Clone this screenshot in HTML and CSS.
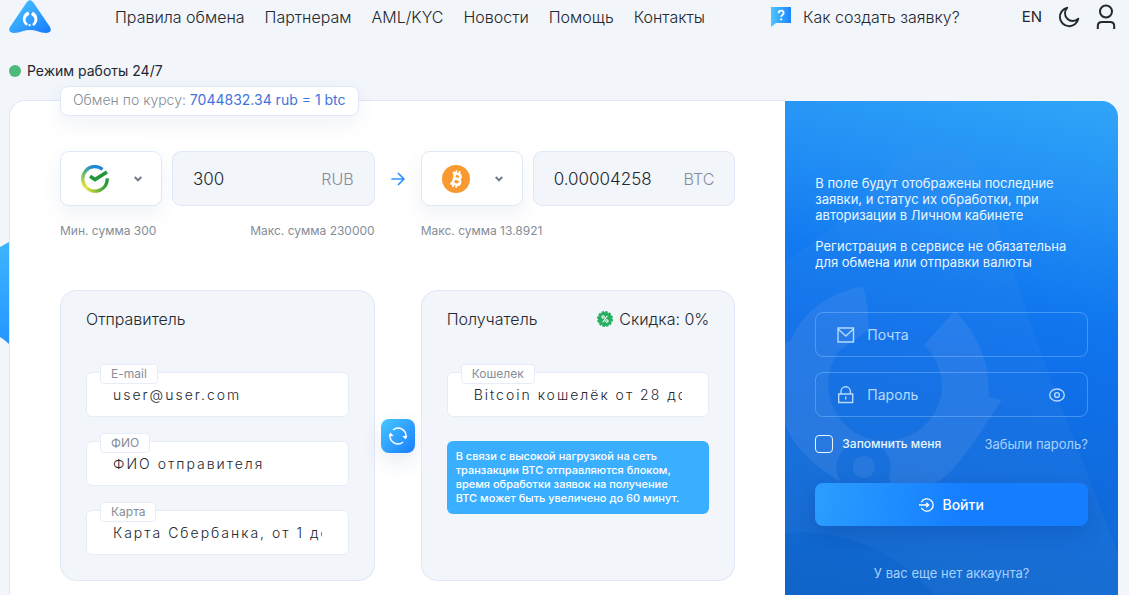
FILE: index.html
```html
<!DOCTYPE html>
<html lang="ru">
<head>
<meta charset="utf-8">
<meta name="viewport" content="width=device-width, initial-scale=1">
<title>Обмен RUB на BTC</title>
<link rel="stylesheet" href="styles.css">
</head>
<body>
<svg class="backdrop" viewBox="0 0 40 106" aria-hidden="true">
  <defs><linearGradient id="gBack" x1="0" y1="0" x2="0" y2="1"><stop offset="0" stop-color="#3fb9ff"/><stop offset="1" stop-color="#2292ff"/></linearGradient></defs>
  <path d="M0 6 L9 1 L40 -10 V116 L9 103 Q5 99 0 96Z" fill="url(#gBack)"/>
</svg>
<header class="header">
  <a class="logo" href="#" aria-label="Главная">
    <svg width="42" height="33" viewBox="0 0 42 33" aria-hidden="true">
      <defs><linearGradient id="gLogo" x1="0" y1="0" x2="1" y2="1"><stop offset="0" stop-color="#45c4ff"/><stop offset=".5" stop-color="#35a4ff"/><stop offset="1" stop-color="#1478ff"/></linearGradient></defs>
      <path d="M17.600 2.500 Q21 -1.800 24.400 2.500 L41 27 Q43.500 32.500 37.500 33 Q32 33 28.500 31.200 Q21 29 13.500 31.200 Q10 33 4.500 33 Q-1.500 32.500 1 27Z" fill="url(#gLogo)"/>
      <path d="M19.300 11.500 A8 8 0 0 0 17.500 25.800 L19 24 A5 5 0 0 1 17.300 17 L20.300 14.600Z" fill="#fff"/>
      <path d="M23.800 11.800 A8 8 0 0 1 24.300 26 L23.300 24 A5 5 0 0 0 24.600 17 L22 14.600Z" fill="#fff"/>
      <circle cx="20.600" cy="25.200" r="1.100" fill="#fff"/>
    </svg>
  </a>
  <nav class="nav">
    <a href="#">Правила обмена</a>
    <a href="#">Партнерам</a>
    <a href="#">AML/KYC</a>
    <a href="#">Новости</a>
    <a href="#">Помощь</a>
    <a href="#">Контакты</a>
  </nav>
  <a class="help" href="#">
    <svg width="20" height="20" viewBox="0 0 20 20" aria-hidden="true">
      <defs><linearGradient id="gHelp" x1="0" y1="0" x2="1" y2="0"><stop offset="0" stop-color="#4cc6ff"/><stop offset="1" stop-color="#1c84ff"/></linearGradient></defs>
      <path d="M0 0H20V16H5L0 20Z" fill="url(#gHelp)"/>
      <path d="M7.600 6.200 Q7.800 3.700 10.200 3.700 Q12.600 3.700 12.600 5.900 Q12.600 7.200 11.300 8 Q10.200 8.700 10.200 9.800" fill="none" stroke="#fff" stroke-width="1.800"/>
      <circle cx="10.200" cy="12.300" r="1.100" fill="#fff"/>
    </svg>
    <span>Как создать заявку?</span>
  </a>
  <div class="tools">
    <a class="lang" href="#">EN</a>
    <button class="tool" type="button" aria-label="Тёмная тема">
      <svg width="22" height="22" viewBox="0 0 22 22" fill="none" stroke="#23272e" stroke-width="1.900" stroke-linejoin="round" aria-hidden="true"><path d="M9.200 1.800 A9.300 9.300 0 1 0 20.300 12.700 A7.400 7.400 0 0 1 9.200 1.800Z"/></svg>
    </button>
    <a class="tool" href="#" aria-label="Профиль">
      <svg width="20" height="26" viewBox="0 0 20 26" fill="none" stroke="#23272e" stroke-width="2" aria-hidden="true"><circle cx="10" cy="7.500" r="6"/><path d="M1.800 25 V22 Q1.800 18 6 18 H14 Q18.200 18 18.200 22 V25"/></svg>
    </a>
  </div>
</header>

<p class="status"><span class="dot"></span>Режим работы 24/7</p>

<main class="card">
  <form class="exchange">
    <p class="rate">Обмен по курсу: <span>7044832.34 rub = 1 btc</span></p>
    <div class="columns">
      <div class="amount">
        <div class="picker">
          <svg width="28" height="28" viewBox="0 0 28 28" fill="none" aria-hidden="true">
            <defs>
              <linearGradient id="gS1" x1="0" y1="1" x2=".5" y2="0"><stop offset="0" stop-color="#f2e73b"/><stop offset=".55" stop-color="#6fbf62"/><stop offset="1" stop-color="#1c86d8"/></linearGradient>
              <linearGradient id="gS2" x1="0" y1="0" x2="1" y2="0"><stop offset="0" stop-color="#e3e23c"/><stop offset="1" stop-color="#21963a"/></linearGradient>
            </defs>
            <path d="M21.500 4.300 A12.200 12.200 0 0 0 5.400 22.600" stroke="url(#gS1)" stroke-width="3.400"/>
            <path d="M5.400 22.600 A12.200 12.200 0 0 0 26.200 13.400" stroke="url(#gS2)" stroke-width="3.400"/>
            <path d="M9 11.300 L14 14.600 L26 6.900" stroke="#21963a" stroke-width="3.600"/>
          </svg>
          <svg class="chevron" width="8" height="6" viewBox="0 0 8 6" fill="none" stroke="#737c8b" stroke-width="2" aria-hidden="true"><path d="M.7 1 L4 4.300 L7.300 1"/></svg>
          <select aria-label="Отдаёте"><option>RUB</option></select>
        </div>
        <label class="sum"><input type="text" value="300" aria-label="Сумма RUB"><span>RUB</span></label>
      </div>
      <svg class="arrow" width="14" height="14" viewBox="0 0 14 14" fill="none" stroke="#2a93ff" stroke-width="1.700" stroke-linecap="round" stroke-linejoin="round" aria-hidden="true"><path d="M1 7H13M7.500 1.500L13 7L7.500 12.500"/></svg>
      <div class="amount">
        <div class="picker">
          <svg width="28" height="28" viewBox="0 0 28 28" fill="none" aria-hidden="true">
            <circle cx="14" cy="14" r="14" fill="#f99a30"/>
            <g transform="rotate(13 14 14)" stroke="#fff" stroke-width="2.500"><path d="M9.500 8.600 H15 Q18 8.800 18 11.200 Q18 13.600 15 13.700 H12 H15.400 Q18.800 13.900 18.800 16.600 Q18.800 19.400 15.400 19.400 H9.500"/><path d="M12 8.600V19.400"/><path d="M12.600 5.300V8M16 5.300V8M12.600 20V22.700M16 20V22.700" stroke-width="1.700"/></g>
          </svg>
          <svg class="chevron" width="8" height="6" viewBox="0 0 8 6" fill="none" stroke="#737c8b" stroke-width="2" aria-hidden="true"><path d="M.7 1 L4 4.300 L7.300 1"/></svg>
          <select aria-label="Получаете"><option>BTC</option></select>
        </div>
        <label class="sum"><input type="text" value="0.00004258" aria-label="Сумма BTC"><span>BTC</span></label>
      </div>
    </div>
    <div class="columns limits">
      <p><span>Мин. сумма 300</span><span>Макс. сумма 230000</span></p>
      <i></i>
      <p><span>Макс. сумма 13.8921</span></p>
    </div>
    <div class="columns parties">
      <section class="panel">
        <h2>Отправитель</h2>
        <div class="field"><label for="email">E-mail</label><input id="email" type="email" placeholder="user@user.com"></div>
        <div class="field"><label for="fio">ФИО</label><input id="fio" type="text" placeholder="ФИО отправителя"></div>
        <div class="field"><label for="cardno">Карта</label><input id="cardno" type="text" placeholder="Карта Сбербанка, от 1 до"></div>
      </section>
      <button class="swap" type="button" aria-label="Поменять местами">
        <svg width="20" height="20" viewBox="0 0 20 20" fill="none" stroke="#fff" stroke-width="1.400" aria-hidden="true"><path d="M5 4 A7.800 7.800 0 0 1 17.700 11.500"/><path d="M15 16 A7.800 7.800 0 0 1 2.300 8.500"/><path d="M14.300 10 L19.500 9.700 L17.600 13.500Z M5.700 10 L.5 10.300 L2.400 6.500Z" fill="#fff" stroke="none"/></svg>
      </button>
      <section class="panel">
        <h2>Получатель
          <span class="discount">
            <svg width="16" height="16" viewBox="0 0 16 16" aria-hidden="true"><circle cx="8" cy="8" r="7" fill="#27ae60"/><circle cx="8" cy="8" r="7.200" fill="none" stroke="#27ae60" stroke-width="1.600" stroke-dasharray="2.500 1.270"/><g fill="none" stroke="#fff" stroke-width="1.100"><circle cx="6.100" cy="6" r="1.200"/><circle cx="9.900" cy="10" r="1.200"/><path d="M10.300 4.700L5.700 11.300"/></g></svg>
            Скидка: 0%
          </span>
        </h2>
        <div class="field"><label for="wallet">Кошелек</label><input id="wallet" type="text" placeholder="Bitcoin кошелёк от 28 до"></div>
        <p class="notice">В связи с высокой нагрузкой на сеть<br>транзакции BTC отправляются блоком,<br>время обработки заявок на получение<br>BTC может быть увеличено до 60 минут.</p>
      </section>
    </div>
  </form>

  <aside class="account">
    <svg class="watermark" viewBox="0 0 333 494" preserveAspectRatio="xMidYMin slice" aria-hidden="true">
      <path d="M103 68 Q120 44 145 44 Q180 44 193 68 L260 262 L333 452 V494 H150 Q90 426 0 432 V160 Q60 124 103 68Z" fill="#5a9bea" fill-opacity=".1"/>
      <g fill="#8fb0ee" fill-opacity=".15">
        <path d="M78 185 Q24 196 5 241 L-3 241 V314 Q8 354 56 381 A27 27 0 1 1 104 376 L106 382 Q143 396 168 368 Q190 342 199 326 L217 299 L204 296 Q206 246 170 210 L139 244 Q158 262 157 290 A57 57 0 1 1 54 250 L84 229 Q84 204 78 185Z"/>
        <circle cx="79" cy="366" r="11"/>
      </g>
    </svg>
    <div class="intro">
      <p>В поле будут отображены последние<br>заявки, и статус их обработки, при<br>авторизации в Личном кабинете</p>
      <p>Регистрация в сервисе не обязательна<br>для обмена или отправки валюты</p>
    </div>
    <form class="login">
      <label class="credential">
        <svg width="18" height="16" viewBox="0 0 18 16" fill="none" stroke="#b5d9ff" stroke-width="1.400" aria-hidden="true"><path d="M1 1H16.500V15H1Z M1 2L8.800 9L16.500 2"/></svg>
        <input type="email" placeholder="Почта" aria-label="Почта">
      </label>
      <label class="credential">
        <svg width="18" height="18" viewBox="0 0 18 18" fill="none" stroke="#b5d9ff" stroke-width="1.400" aria-hidden="true"><path d="M1.700 8H15.700V16.500H1.700Z M4 8V5.500A4.700 4.700 0 0 1 13.400 5.500V8M8.700 10.500V13.500"/></svg>
        <input type="password" placeholder="Пароль" aria-label="Пароль">
        <button class="eye" type="button" aria-label="Показать пароль"><svg width="16" height="14" viewBox="0 0 16 14" fill="none" stroke="#b5d9ff" stroke-width="1.400" aria-hidden="true"><ellipse cx="8" cy="7" rx="7.300" ry="6"/><circle cx="8" cy="7" r="2.400"/></svg></button>
      </label>
      <div class="options">
        <label class="remember"><input type="checkbox">Запомнить меня</label>
        <a href="#">Забыли пароль?</a>
      </div>
      <button class="submit" type="submit">
        <svg width="15" height="14" viewBox="0 0 15 14" fill="none" stroke="#fff" stroke-width="1.300" aria-hidden="true"><path d="M2.400 4.300A6.200 6.200 0 1 1 2.400 9.700M0 7H9.500M7.200 4.700L9.700 7L7.200 9.300"/></svg>
        Войти
      </button>
      <a class="signup" href="#">У вас еще нет аккаунта?</a>
    </form>
  </aside>
</main>
</body>
</html>
```
FILE: styles.css
```css
* { box-sizing: border-box; }

body {
  position: relative;
  display: flex;
  flex-direction: column;
  min-height: 100vh;
  margin: 0;
  padding: 0 11px 0 9px;
  background: #f2f5fa;
  color: #23272e;
  font-family: Inter, "Open Sans", sans-serif;
  font-size: 14px;
  line-height: 16px;
}

a { color: inherit; text-decoration: none; }
p, h2 { margin: 0; font-weight: 400; }
svg { display: block; flex: none; }
button, input, select { margin: 0; padding: 0; border: 0; background: none; color: inherit; font: inherit; }
button, select { cursor: pointer; }
input { min-width: 0; width: 100%; outline: 0; }

.backdrop { position: absolute; left: 0; top: 241px; width: 40px; }

.header { display: flex; align-items: center; height: 33px; font-size: 16px; font-weight: 300; white-space: nowrap; }
.nav { display: flex; gap: 20px; margin-left: 64px; }
.help { display: flex; align-items: center; gap: 12px; margin-left: 66px; }
.tools { display: flex; align-items: center; gap: 16px; margin: 0 2px 0 auto; }
.lang { font-size: 15px; font-weight: 400; }

.status { display: flex; align-items: center; gap: 6px; height: 16px; margin: 30px 0 21px; }
.dot { width: 12px; height: 12px; border-radius: 50%; background: #4cba7b; }

.card { position: relative; display: flex; flex: 1; }
.exchange {
  flex: 1;
  padding: 0 50px 14px;
  border: 1px solid #dfe8f8;
  border-width: 1px 0 0 1px;
  border-radius: 16px 0 0 0;
  background: #fff;
}

.rate {
  width: fit-content;
  margin-top: -15px;
  padding: 5px 12px 7px;
  border: 1px solid #dfe8f8;
  border-radius: 8px;
  background: #fff;
  box-shadow: 0 8px 20px rgba(60, 90, 150, .08);
  color: #858d98;
  font-weight: 300;
}
.rate span { color: #3f73dd; font-weight: 400; }

.columns { display: grid; grid-template-columns: 1fr 46px 1fr; align-items: center; }
.exchange > .columns:nth-of-type(1) { margin-top: 35px; }
.arrow, .swap { justify-self: center; }

.amount { display: grid; grid-template-columns: 102px 1fr; gap: 10px; height: 55px; font-size: 16px; font-weight: 300; }
.picker {
  display: grid;
  grid-template-columns: 1fr 8px;
  align-items: center;
  padding: 0 19px 0 20px;
  border: 1px solid #dfe8f8;
  border-radius: 9px;
  background: #fff;
  box-shadow: 0 8px 20px rgba(60, 90, 150, .08);
}
.picker svg { grid-area: 1 / 1; }
.picker .chevron { grid-area: 1 / 2; }
.picker select { grid-area: 1 / 1 / 2 / 3; width: 100%; min-width: 0; height: 100%; opacity: 0; }
.sum {
  display: flex;
  align-items: center;
  padding: 0 20px;
  border: 1px solid #dfe8f8;
  border-radius: 9px;
  background: #f2f5fa;
}
.sum input { font-size: 17px; }
.sum span { color: #858d98; }

.limits { margin-top: 17px; color: #858d98; font-size: 12px; }
.limits p { display: flex; justify-content: space-between; }

.parties { margin-top: 51px; }
.panel {
  align-self: stretch;
  min-width: 0;
  padding: 20px 25px 25px;
  border: 1px solid #dfe8f8;
  border-radius: 16px;
  background: #f2f5fa;
}
.panel h2 { display: flex; justify-content: space-between; margin-bottom: 45px; font-size: 16px; font-weight: 300; line-height: 16px; }
.discount { display: flex; align-items: center; gap: 6px; }
.field {
  position: relative;
  height: 45px;
  padding: 11px 26px;
  border: 1px solid #e6edf8;
  border-radius: 6px;
  background: #fff;
}
.field + .field { margin-top: 24px; }
.field label {
  position: absolute;
  left: 13px;
  top: -9px;
  padding: 1px 10px;
  border: 1px solid #e6edf8;
  border-radius: 4px;
  background: #fff;
  color: #858d98;
  font-size: 12px;
}
.field input { display: block; height: 20px; font-size: 14px; font-weight: 300; letter-spacing: 2px; }
.field input::placeholder { color: #23272e; opacity: 1; }

.notice { margin-top: 24px; padding: 8px 9px 9px; border-radius: 6px; background: #3aafff; color: #fff; font-size: 11px; font-weight: 500; line-height: 14px; white-space: nowrap; }

.swap {
  display: grid;
  place-items: center;
  width: 34px;
  height: 34px;
  border-radius: 8px;
  background: linear-gradient(135deg, #46c8ff, #1a7dff);
  box-shadow: 0 8px 20px rgba(60, 90, 150, .12);
}

.account {
  position: relative;
  width: 30%;
  margin-top: 1px;
  overflow: hidden;
  padding: 74px 30px 14px;
  border-radius: 0 16px 0 0;
  background: linear-gradient(192deg, #30a5f8 0%, #228ff5 20%, #1077ef 40%, #0f70ea 50%, #106bdc 72%, #1067cd 90%, #1064c8 100%);
  color: #eaf6ff;
}
.watermark { position: absolute; inset: 0; width: 100%; height: 100%; }
.intro, .login { position: relative; display: flex; flex-direction: column; gap: 15px; font-size: 13px; }
.intro { font-weight: 500; white-space: nowrap; }
.login { margin-top: 42px; }
.credential {
  display: flex;
  align-items: center;
  gap: 12px;
  height: 45px;
  padding: 0 22px 0 21px;
  border: 1px solid rgba(130, 190, 255, .45);
  border-radius: 8px;
}
.credential input { flex: 1; font-size: 14px; }
.credential input::placeholder { color: #b5d9ff; opacity: 1; }
.options { display: flex; align-items: center; justify-content: space-between; height: 23px; white-space: nowrap; }
.options a, .signup { color: #a5d2ff; }
.remember { display: flex; align-items: center; gap: 9px; font-size: 12px; font-weight: 500; }
.remember input { appearance: none; width: 18px; height: 18px; border: 1px solid #eaf6ff; border-radius: 4px; }
.submit {
  display: flex;
  align-items: center;
  justify-content: center;
  gap: 8px;
  height: 43px;
  margin-top: 13px;
  border-radius: 8px;
  background: linear-gradient(100deg, #2c9dff, #147eff 55%);
  box-shadow: 0 8px 20px rgba(0, 40, 130, .2);
  color: #fff;
  font-size: 14px;
  font-weight: 500;
}
.signup { align-self: center; margin-top: 24px; }
```
